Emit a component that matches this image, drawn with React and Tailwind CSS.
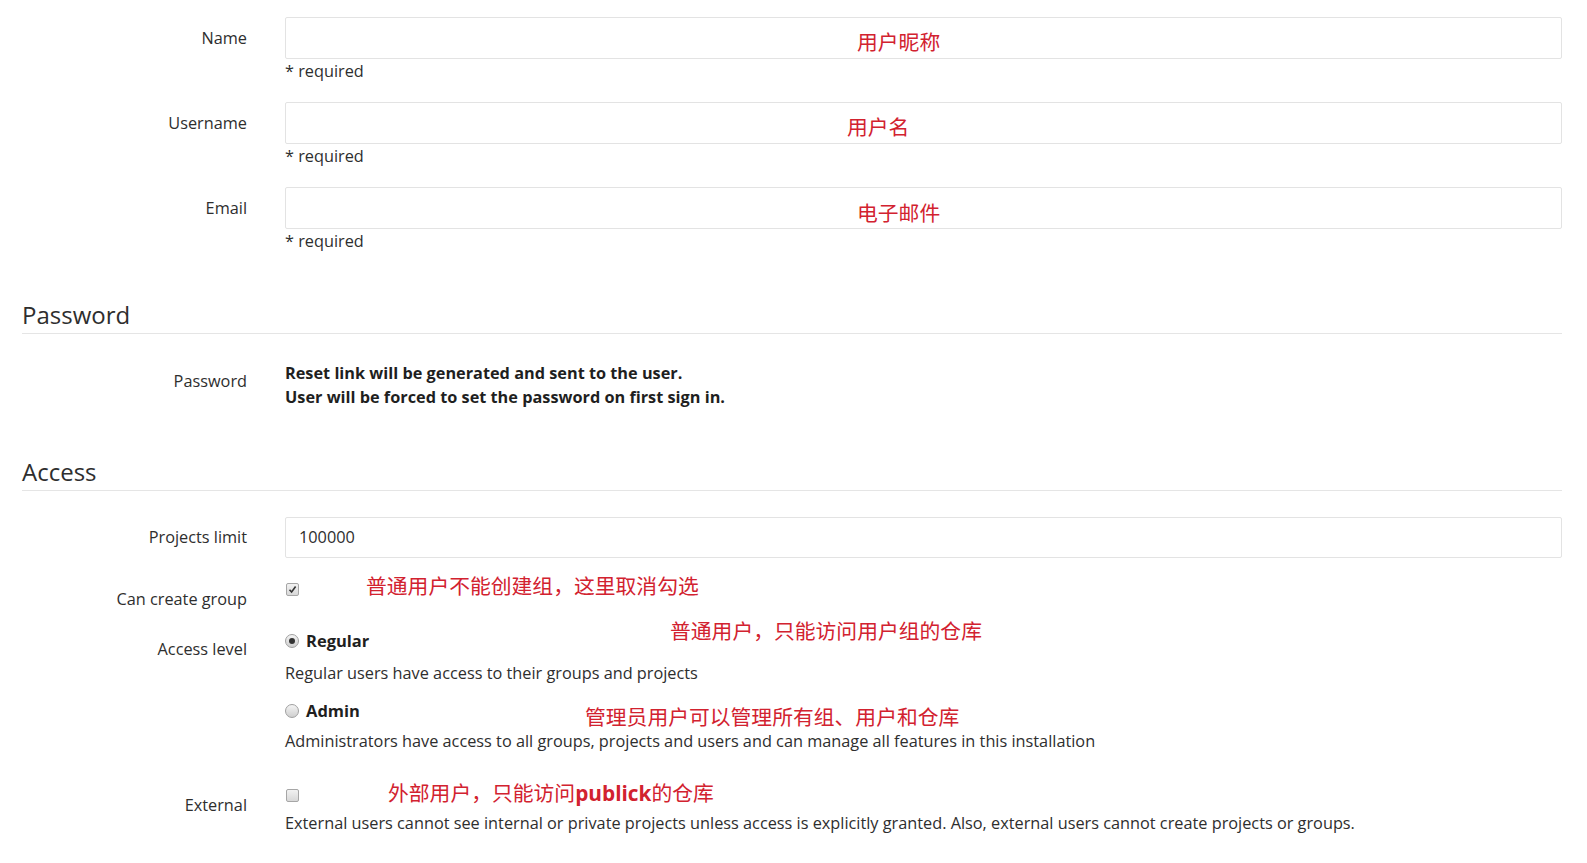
import React from 'react';

const LABEL_W = 'w-[225px]';

function Label({ children, pt = 'pt-[9px]' }) {
  return (
    <div className={`${LABEL_W} shrink-0 text-right leading-6 ${pt}`}>{children}</div>
  );
}

function TextField({ value }) {
  return (
    <div className="h-[42px] w-full rounded-[2px] border border-[#e3e3e3] bg-white px-[13px] flex items-center">
      {value}
    </div>
  );
}

function FieldRow({ label }) {
  return (
    <div className="flex gap-[38px] mb-[20px]">
      <Label>{label}</Label>
      <div className="flex-1">
        <TextField />
        <div className="mt-[1px] leading-[22px]">* required</div>
      </div>
    </div>
  );
}

function Heading({ children, className = '' }) {
  return (
    <div className={`border-b border-[#e5e5e5] pb-[3px] ${className}`}>
      <h2 className="text-[24px] leading-[30px] font-normal text-[#2e2e2e]">{children}</h2>
    </div>
  );
}

function CheckBox({ checked }) {
  return (
    <span className="inline-flex h-[13px] w-[13px] items-center justify-center rounded-[2px] border border-[#a6a6a6] bg-gradient-to-b from-[#f2f2f2] to-[#d8d8d8]">
      {checked && (
        <svg width="9" height="9" viewBox="0 0 9 9">
          <path d="M1.5 4.8 L3.6 7 L7.6 1.6" fill="none" stroke="#333" strokeWidth="1.6" />
        </svg>
      )}
    </span>
  );
}

function Radio({ checked }) {
  return (
    <span className="inline-flex h-[14px] w-[14px] items-center justify-center rounded-full border border-[#a0a0a0] bg-gradient-to-b from-[#f4f4f4] to-[#cfcfcf]">
      {checked && <span className="h-[6px] w-[6px] rounded-full bg-[#333]" />}
    </span>
  );
}

function Note({ className, children }) {
  return (
    <div
      className={`absolute whitespace-nowrap text-[20.8px] leading-[24px] text-[#d2222f] ${className}`}
      style={{ fontFamily: '"Noto Sans CJK SC", "Noto Sans", sans-serif' }}
    >
      {children}
    </div>
  );
}

export default function App() {
  return (
    <div
      className="relative flex min-h-screen flex-col bg-white text-[#2e2e2e] text-[16.3px] pl-[22px] pr-[25px] pt-[17px]"
      style={{ fontFamily: '"Open Sans", "Noto Sans", sans-serif' }}
    >
      <FieldRow label="Name" />
      <FieldRow label="Username" />
      <FieldRow label="Email" />

      <Heading className="mt-[28px]">Password</Heading>

      <div className="flex gap-[38px] mt-[27px]">
        <Label pt="pt-[8px]">Password</Label>
        <div className="flex-1 font-bold leading-6 text-[#1f1f1f]">
          <p>Reset link will be generated and sent to the user.</p>
          <p>User will be forced to set the password on first sign in.</p>
        </div>
      </div>

      <Heading className="mt-[48px]">Access</Heading>

      <div className="flex gap-[38px] mt-[26px]">
        <Label pt="pt-[8px]">Projects limit</Label>
        <div className="flex-1">
          <div className="h-[41px] w-full rounded-[2px] border border-[#e3e3e3] bg-white px-[13px] flex items-center">
            100000
          </div>
        </div>
      </div>

      <div className="flex gap-[38px] mt-[19px]">
        <Label pt="pt-[10px]">Can create group</Label>
        <div className="flex-1 h-6 flex items-center pl-[1px]">
          <CheckBox checked />
        </div>
      </div>

      <div className="flex gap-[38px] mt-[16px]">
        <Label pt="pt-[10px]">Access level</Label>
        <div className="flex-1 pt-[2px]">
          <div className="flex items-center gap-[7px] leading-6 text-[16.5px] font-bold text-[#1f1f1f]">
            <Radio checked />
            <span>Regular</span>
          </div>
          <div className="leading-6 mt-[8px]">Regular users have access to their groups and projects</div>
          <div className="flex items-center gap-[7px] leading-6 text-[16.5px] font-bold text-[#1f1f1f] mt-[14px]">
            <Radio />
            <span>Admin</span>
          </div>
          <div className="leading-6 mt-[6px]">
            Administrators have access to all groups, projects and users and can manage all features in this installation
          </div>
        </div>
      </div>

      <div className="flex gap-[38px] mt-[30px]">
        <Label pt="pt-[10px]">External</Label>
        <div className="flex-1">
          <div className="h-6 flex items-center pl-[1px]">
            <CheckBox />
          </div>
          <div className="leading-6 mt-[4px]">
            External users cannot see internal or private projects unless access is explicitly granted. Also, external users cannot create projects or groups.
          </div>
        </div>
      </div>

      <Note className="left-[857px] top-[29px]">用户昵称</Note>
      <Note className="left-[847px] top-[114px]">用户名</Note>
      <Note className="left-[857px] top-[200px]">电子邮件</Note>
      <Note className="left-[366px] top-[573px]">普通用户不能创建组，这里取消勾选</Note>
      <Note className="left-[670px] top-[618px]">普通用户，只能访问用户组的仓库</Note>
      <Note className="left-[585px] top-[704px]">管理员用户可以管理所有组、用户和仓库</Note>
      <Note className="left-[388px] top-[780px]">
        外部用户，只能访问<span className="font-bold" style={{ fontFamily: '"Open Sans", sans-serif' }}>publick</span>的仓库
      </Note>
    </div>
  );
}
